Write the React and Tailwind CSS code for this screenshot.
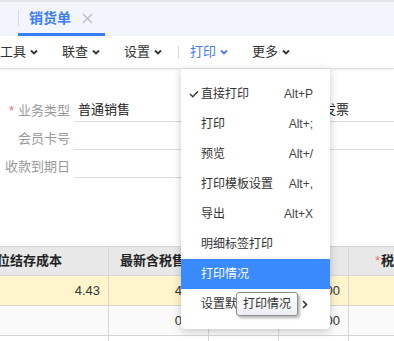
import React from "react";

const Chevron = ({ color = "#333" }) => (
  <svg width="8" height="6" viewBox="0 0 8 6" className="ml-[4px]">
    <path d="M1 1.5 L4 4.5 L7 1.5" fill="none" stroke={color} strokeWidth="1.8" />
  </svg>
);

const menuItems = [
  { label: "直接打印", key: "Alt+P", checked: true },
  { label: "打印", key: "Alt+;" },
  { label: "预览", key: "Alt+/" },
  { label: "打印模板设置", key: "Alt+," },
  { label: "导出", key: "Alt+X" },
  { label: "明细标签打印" },
  { label: "打印情况", active: true },
  { label: "设置默认模板", sub: true },
];

const App = () => {
  return (
    <div className="relative w-[394px] h-[341px] overflow-hidden bg-white font-['Liberation_Sans','Noto_Sans_CJK_SC',sans-serif] text-[13px] text-[#333]">
      {/* ===== TAB BAR ===== */}
      <div className="h-[36px] bg-[#f2f5fb] border-t-[2px] border-[#e2e4e8] flex items-end">
        <div className="ml-[18px] w-[87px] h-[33px] border-b-[3px] border-[#3a7cf6] flex items-center">
          <div className="w-px h-[16px] bg-[#d8dbe2]" />
          <span className="ml-[10px] text-[14px] leading-[18px] font-semibold text-[#3a7cf6]">
            销货单
          </span>
          <svg width="11" height="11" viewBox="0 0 11 11" className="ml-[11px]">
            <path d="M1 1 L10 10 M10 1 L1 10" stroke="#b8bcc4" strokeWidth="1.3" />
          </svg>
        </div>
      </div>

      {/* ===== TOOLBAR ===== */}
      <div className="h-[33px] bg-white border-b border-[#e3e3e3] shadow-[0_1px_3px_rgba(0,0,0,0.08)] flex items-center">
        <div className="flex items-center w-[62px]">
          <span>工具</span>
          <Chevron />
        </div>
        <div className="flex items-center w-[62px]">
          <span>联查</span>
          <Chevron />
        </div>
        <div className="flex items-center w-[54px]">
          <span>设置</span>
          <Chevron />
        </div>
        <div className="w-px h-[13px] bg-[#d6d9e0] mr-[11px]" />
        <div className="flex items-center w-[62px] text-[#4a78f2]">
          <span>打印</span>
          <Chevron color="#4a78f2" />
        </div>
        <div className="flex items-center">
          <span>更多</span>
          <Chevron />
        </div>
      </div>

      {/* ===== FORM ===== */}
      <div className="pt-[25px] leading-[18px]">
        <div className="flex h-[28px]">
          <div className="w-[70px] flex items-end justify-end pb-[2px] text-[#999]">
            <span className="text-[#f56c6c] mr-[4px]">*</span>业务类型
          </div>
          <div className="ml-[4px] w-[160px] border-b border-[#dcdcdc] flex items-end pb-[2px] pl-[4px] text-[#222]">
            普通销售
          </div>
          <div className="w-[59px] flex items-end justify-end pb-[2px] pr-[4px] text-[#999]">
            发票类型
          </div>
          <div className="flex-1 border-b border-[#dcdcdc] flex items-end pb-[2px] pl-[4px] text-[#222]">
            普通发票
          </div>
        </div>
        <div className="flex h-[28px]">
          <div className="w-[70px] flex items-end justify-end pb-[2px] text-[#999]">
            会员卡号
          </div>
          <div className="ml-[4px] w-[160px] border-b border-[#dcdcdc]" />
          <div className="w-[59px]" />
          <div className="flex-1 border-b border-[#dcdcdc]" />
        </div>
        <div className="flex h-[28px]">
          <div className="w-[70px] flex items-end justify-end pb-[2px] text-[#999]">
            收款到期日
          </div>
          <div className="ml-[4px] w-[160px] border-b border-[#dcdcdc]" />
        </div>
      </div>

      {/* ===== TABLE ===== */}
      <div className="mt-[68px] ml-[-27px] border-t border-[#d6d6d6] grid grid-cols-[136px_100px_70px_70px_100px] leading-[18px]">
        <div className="h-[29px] bg-[#e8e8e8] border-r border-b border-[#d6d6d6] flex items-center pl-[11px] font-bold text-[#222] whitespace-nowrap overflow-hidden">
          单位结存成本
        </div>
        <div className="h-[29px] bg-[#e8e8e8] border-r border-b border-[#d6d6d6] flex items-center pl-[11px] font-bold text-[#222] whitespace-nowrap overflow-hidden">
          最新含税售价
        </div>
        <div className="h-[29px] bg-[#e8e8e8] border-r border-b border-[#d6d6d6]" />
        <div className="h-[29px] bg-[#e8e8e8] border-r border-b border-[#d6d6d6]" />
        <div className="h-[29px] bg-[#e8e8e8] border-b border-[#d6d6d6] flex items-center pl-[26px] font-bold text-[#222] whitespace-nowrap">
          <span className="text-[#f56c6c] font-normal mr-[1px]">*</span>税率
        </div>

        <div className="h-[30px] bg-[#fff5cc] border-r border-b border-[#d6d6d6] flex items-center justify-end pr-[8px]">
          4.43
        </div>
        <div className="h-[30px] bg-[#fff5cc] border-r border-b border-[#d6d6d6] flex items-center justify-end pr-[8px]">
          4.50
        </div>
        <div className="h-[30px] bg-[#fff5cc] border-r border-b border-[#d6d6d6]" />
        <div className="h-[30px] bg-[#fff5cc] border-r border-b border-[#d6d6d6] flex items-center justify-end pr-[8px]">
          4.00
        </div>
        <div className="h-[30px] bg-[#fff5cc] border-b border-[#d6d6d6]" />

        <div className="h-[30px] bg-[#fafafa] border-r border-b border-[#d6d6d6]" />
        <div className="h-[30px] bg-[#fafafa] border-r border-b border-[#d6d6d6] flex items-center justify-end pr-[8px]">
          0.00
        </div>
        <div className="h-[30px] bg-[#fafafa] border-r border-b border-[#d6d6d6]" />
        <div className="h-[30px] bg-[#fafafa] border-r border-b border-[#d6d6d6] flex items-center justify-end pr-[8px]">
          0.00
        </div>
        <div className="h-[30px] bg-[#fafafa] border-b border-[#d6d6d6]" />

        <div className="h-[30px] border-r border-[#d6d6d6]" />
        <div className="h-[30px] border-r border-[#d6d6d6]" />
        <div className="h-[30px] border-r border-[#d6d6d6]" />
        <div className="h-[30px] border-r border-[#d6d6d6]" />
        <div className="h-[30px]" />
      </div>

      {/* ===== PRINT DROPDOWN ===== */}
      <div className="absolute left-[181px] top-[69px] w-[149px] py-[10px] bg-white rounded-b-[4px] shadow-[0_2px_8px_rgba(0,0,0,0.22)] text-[12px] leading-[16px]">
        {menuItems.map((item) => (
          <div
            key={item.label}
            className={`relative h-[30px] flex items-center pl-[20px] pr-[17px] ${
              item.active ? "bg-[#3b8afd] text-white" : "text-[#333]"
            }`}
          >
            {item.checked && (
              <svg width="10" height="8" viewBox="0 0 10 8" className="absolute left-[8px] top-[11px]">
                <path d="M1 4 L3.8 6.8 L9 1.2" fill="none" stroke="#333" strokeWidth="1.3" />
              </svg>
            )}
            <span>{item.label}</span>
            {item.key && <span className="ml-auto text-[#444]">{item.key}</span>}
            {item.sub && (
              <svg width="6" height="9" viewBox="0 0 6 9" className="ml-auto mr-[5px]">
                <path d="M1 1 L4.5 4.5 L1 8" fill="none" stroke="#333" strokeWidth="1.6" />
              </svg>
            )}
          </div>
        ))}
      </div>

      {/* ===== TOOLTIP ===== */}
      <div className="absolute left-[236px] top-[292px] h-[24px] px-[6px] flex items-center text-[12px] text-[#333] border border-[#8e8e8e] rounded-[3px] bg-gradient-to-b from-white to-[#eceef6] shadow-[2px_2px_3px_rgba(0,0,0,0.3)]">
        打印情况
      </div>
    </div>
  );
};

export default App;
